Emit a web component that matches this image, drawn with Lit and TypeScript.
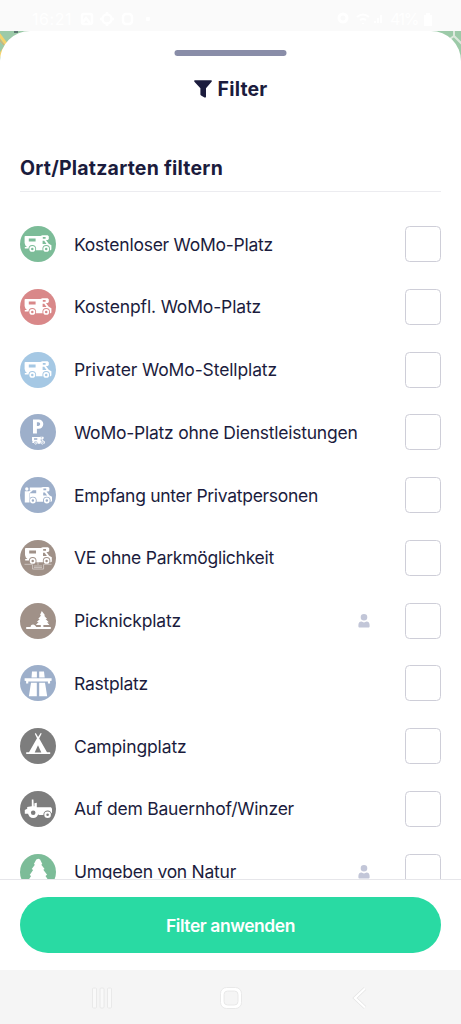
import { LitElement, html, css, svg, nothing } from "lit";
import { customElement, property } from "lit/decorators.js";

const camper = (bg: string) => svg`
  <path fill="#fff" d="M4.6 10.6 L5.4 9.9 H20.4 L22.4 9.3 H27.6 L28.8 10.2 V13 L27.8 14 H26 L28.7 17.7 L31.4 19.2 V23.4 L30.6 24.2 H9.4 V22.4 H4.800 V21 H7 L5.4 19.600 L4.600 17Z"/>
  <path fill=${bg} d="M8.8 12.600h6.800v3H8.800z M22.800 11h2.800v1.700h-2.800z M22.600 14.800h1.600l2.300 3.200h-3.900z"/>
  <circle cx="12.300" cy="22.900" r="3.800" fill=${bg}/><circle cx="26.200" cy="22.900" r="3.800" fill=${bg}/>
  <circle cx="12.300" cy="22.900" r="2.100" fill=${bg} stroke="#fff" stroke-width="1.700"/>
  <circle cx="26.200" cy="22.900" r="2.100" fill=${bg} stroke="#fff" stroke-width="1.700"/>`;

const glyphs: Record<string, (bg: string) => unknown> = {
  camper,
  parking: (bg) => svg`
    <path fill="#fff" fill-rule="evenodd" d="M13 5.400h5.600a4.700 4.700 0 0 1 0 9.400h-1.700v4.800H13z M16.900 8.300v3.600h1.500a1.800 1.800 0 0 0 0-3.600z"/>
    <g transform="translate(9.800 18.200) scale(.48)">${camper(bg)}</g>`,
  host: (bg) => svg`<g transform="translate(.6 .6)">${camper(bg)}</g>
    <path fill=${bg} d="M3.800 9.500h6v17.500h-6z"/>
    <circle cx="6.800" cy="12" r="1.700" fill="#fff"/>
    <path fill="#fff" d="M4.800 14.200h4.200l3-2 .7 1.200-3.200 2.800v9.300H4.800z"/>`,
  service: (bg) => svg`<g transform="translate(.4 -2)">${camper(bg)}</g>
    <path fill="none" stroke="#fff" stroke-opacity=".65" stroke-width=".7" d="M4.500 24.300H12M24 24.300h7.500M12.600 24.300v4.800h11v-4.800M14 26h8M14 27.600h8M18 20v5"/>`,
  picnic: () => svg`
    <path fill="#fff" d="M6.200 24.100h24.600v2H6.200z M10.500 24.200c.3-2 1.300-2.600 2.500-2.600 1.500 0 2.200 1 3.500 2.600z M21.800 8l3.400 4.400h-1.200l3.100 3.600h-1.500l3.200 3.300h-1.700l2.300 2.600h-6v2.400h-2.600v-2.400h-5l2.800-2.800h-1.800l3-3.200h-1.600l3-3.600h-1.300z"/>`,
  highway: (bg) => svg`
    <path fill="#fff" d="M12 6.400h4.900v6.100h-5.400z M19.200 6.400H24l.7 6.100h-5.500z M4.600 13.200h27v2.500l-1.500.4v2.500h-2.200v-2.200H8.300v2.200H6.100v-2.500l-1.500-.4z M11 17.700h5.800v13.500H8.900z M19.200 17.700H25l2.200 13.500h-8z"/>
    <path fill=${bg} d="M17 6h2v6h-2z"/>`,
  tent: (bg) => svg`
    <path fill="#fff" d="M6.200 24.200H9L17 10.200l-2.200-4.500 1-.6 2.300 3.800L20.700 5l1 .6-2.500 4.800L27 24.200h3.200v1.800h-24z"/>
    <path fill=${bg} d="M18 17.200l3.300 7.400h-6.600z"/>`,
  tractor: (bg) => svg`
    <path fill="#fff" d="M11.800 8.600h1.600l.4 6.700h.6v-3l2.400-.6v4.500h14.200l1 1.500v4.500h-2.600l-1 1.700H18.800l-1-1.200h-13v-3.600l2.400-1.300V16l4.600-.8z"/>
    <circle cx="13.200" cy="21.700" r="5.200" fill="#fff"/><circle cx="13.200" cy="21.700" r="2.300" fill=${bg}/>
    <circle cx="27.600" cy="23.800" r="4.200" fill=${bg}/><circle cx="27.600" cy="23.800" r="2.300" fill=${bg} stroke="#fff" stroke-width="2"/>`,
  nature: () => svg`
    <path fill="#fff" d="M18.400 4.800l1.700.8 2.200 4.500-1 .7 3.300 4.100-1.300.9 3.800 5-1.600 1.100 3.200 4.800-1.500 1.300H20V34h-3v-6H9.300l-1.200-1.300 3-4.800-1.400-1 3.400-4.800-1.400-1 3.200-4.300-1-.7 2.400-4.600z"/>`,
};

interface Place { label: string; width: number; icon: string; color: string; member?: boolean }

const places: Place[] = [
  { label: "Kostenloser WoMo-Platz", width: 199, icon: "camper", color: "#7cbc98" },
  { label: "Kostenpfl. WoMo-Platz", width: 187, icon: "camper", color: "#d98889" },
  { label: "Privater WoMo-Stellplatz", width: 203, icon: "camper", color: "#a5c8e4" },
  { label: "WoMo-Platz ohne Dienstleistungen", width: 283.5, icon: "parking", color: "#9dafca" },
  { label: "Empfang unter Privatpersonen", width: 244, icon: "host", color: "#9dafca" },
  { label: "VE ohne Parkmöglichkeit", width: 200, icon: "service", color: "#a09188" },
  { label: "Picknickplatz", width: 107, icon: "picnic", color: "#a09188", member: true },
  { label: "Rastplatz", width: 74, icon: "highway", color: "#9dafca" },
  { label: "Campingplatz", width: 112.5, icon: "tent", color: "#7d7d7d" },
  { label: "Auf dem Bauernhof/Winzer", width: 220, icon: "tractor", color: "#7d7d7d" },
  { label: "Umgeben von Natur", width: 162, icon: "nature", color: "#7cbc98", member: true },
];

/** Text whose tracking is adjusted so that it spans a given width. */
@customElement("tracked-text")
class TrackedText extends LitElement {
  static styles = css`
    :host { display: inline-block; white-space: nowrap; }
    .t { display: inline-block; }
  `;
  @property() text = "";
  @property({ type: Number }) span = 0;
  render() { return html`<span class="t">${this.text}</span>`; }
  firstUpdated() {
    const el = this.renderRoot.querySelector<HTMLElement>(".t")!;
    const natural = el.getBoundingClientRect().width;
    el.style.letterSpacing = `${(this.span - natural) / this.text.length}px`;
  }
}

@customElement("place-row")
class PlaceRow extends LitElement {
  static styles = css`
    :host { display: flex; align-items: center; height: 36px; flex: none; }
    .icon { width: 36px; height: 36px; margin-right: 18px; flex: none; }
    .label { flex: 1; font-size: 17.5px; line-height: 24px; padding-top: 1px; }
    .member { width: 12px; height: 14px; margin-right: 35px; }
    .box { box-sizing: border-box; width: 36px; height: 36px; border: 1.5px solid #ceced8; border-radius: 4.5px; background: #fff; }
  `;
  @property({ attribute: false }) place!: Place;
  render() {
    const p = this.place;
    return html`
      <svg class="icon" viewBox="0 0 36 36"><circle cx="18" cy="18" r="18" fill=${p.color}/>${glyphs[p.icon](p.color)}</svg>
      <span class="label"><tracked-text .text=${p.label} .span=${p.width}></tracked-text></span>
      ${p.member ? html`<svg class="member" viewBox="0 0 12 14"><path fill="#c2c6d8" d="M6 0a3.200 3.200 0 1 1 0 6.600A3.200 3.200 0 0 1 6 0z M3.400 7.400 6 8.600l2.600-1.200C10.700 7.500 11.600 9 11.600 11v1.500q0 1-1 1H1.400q-1 0-1-1V11C.4 9 1.300 7.500 3.400 7.400z"/></svg>` : nothing}
      <span class="box"></span>`;
  }
}

@customElement("app-root")
class AppRoot extends LitElement {
  static styles = css`
    :host { display: flex; flex-direction: column; width: 461px; height: 1024px; overflow: hidden; background: #fff; color: #1b1c3d; font-family: Inter, "Open Sans", sans-serif; }
    .status { height: 31px; flex: none; box-sizing: border-box; padding: 7px 29px 0 32px; display: flex; align-items: center; justify-content: space-between; background: #fafafa; color: #fff; font-size: 16px; }
    .status div { display: flex; align-items: center; gap: 6px; }
    .status svg { display: block; }
    .stage { flex: 1; min-height: 0; display: grid; }
    .map { grid-area: 1 / 1; width: 461px; height: 40px; }
    .sheet { grid-area: 1 / 1; z-index: 1; min-height: 0; display: flex; flex-direction: column; background: #fff; border-radius: 30px 30px 0 0; }
    .handle { width: 112px; height: 6px; border-radius: 3px; background: #898da8; margin: 18.5px auto 0; transform: translateX(-.5px); flex: none; }
    .title { display: flex; align-items: center; justify-content: center; gap: 6px; height: 28px; margin-top: 19px; font-weight: 700; font-size: 19.5px; flex: none; }
    .heading { margin: 52px 20px 0; height: 37.5px; line-height: 26px; box-sizing: border-box; border-bottom: 1.5px solid #ececf0; font-weight: 700; font-size: 19.5px; flex: none; }
    .list { flex: 1; min-height: 0; overflow: hidden; padding: 34px 20px 0; display: flex; flex-direction: column; gap: 26.75px; }
    .action { height: 91px; flex: none; box-sizing: border-box; border-top: 1.5px solid #e6e6ea; padding: 17px 20px 0; }
    .apply { display: block; width: 100%; height: 56px; border: 0; border-radius: 28px; padding: 0; background: #29daa3; color: #fff; font-family: inherit; font-size: 17.5px; font-weight: 600; }
    .nav { height: 54px; flex: none; background: #f5f5f5; display: block; }
  `;
  render() {
    return html`
      <div class="status">
        <div>
          <tracked-text .text=${"16:21"} .span=${40}></tracked-text>
          <svg width="76" height="16" viewBox="0 0 76 16" fill="none" stroke="#fff" stroke-width="2.5">
            <rect x="4" y="3" width="10" height="10" rx="2"/><path d="m5 11 3-4 4 5"/>
            <circle cx="29" cy="8" r="4.5"/><path d="M29 1v3M29 12v3M22 8h3M33 8h3"/>
            <rect x="45" y="3" width="9" height="10" rx="3"/><circle cx="70" cy="8" r="1" />
          </svg>
        </div>
        <div>
          <svg width="48" height="16" viewBox="0 0 48 16" fill="none" stroke="#fff" stroke-width="2">
            <circle cx="7" cy="7" r="4" stroke-width="3"/><path d="M21 6q6-5 12 0M24 9q3-2 6 0M27 12v1M39 12v-2M42 12V7M45 12V4"/>
          </svg>
          <tracked-text .text=${"41%"} .span=${28}></tracked-text>
          <svg width="8" height="14" viewBox="0 0 8 14" fill="#fff"><path d="M2 1h4v2h2v11H0V3h2z"/></svg>
        </div>
      </div>
      <div class="stage">
        <svg class="map" viewBox="0 0 461 40">
          <rect width="461" height="40" fill="#9ccaa8"/>
          <path d="M-2 2 7 14-3 28" fill="none" stroke="#f5d26b" stroke-width="3"/>
          <path d="M-2 7 4 14" fill="none" stroke="#e9a95f" stroke-width="1"/>
          <path d="M14 0h4v2h-4z" fill="#5c7773"/>
          <path d="M454 0v5l8 8M454 5l-7 5" fill="none" stroke="#dce8dc" stroke-width="2"/>
        </svg>
        <div class="sheet">
          <div class="handle"></div>
          <div class="title">
            <svg width="18" height="18" viewBox="0 0 18 18"><path fill="#1b1c3d" d="M.8.3h16.400q1.100.4.4 1.400L12 8.300v8.400q-.3 1.200-1.500.7l-3.400-2q-.7-.4-.7-1V8.300L.4 1.700Q-.2.700.8.300z"/></svg>
            <tracked-text .text=${"Filter"} .span=${50}></tracked-text>
          </div>
          <div class="heading"><tracked-text .text=${"Ort/Platzarten filtern"} .span=${203}></tracked-text></div>
          <div class="list">${places.map((p) => html`<place-row .place=${p}></place-row>`)}</div>
          <div class="action"><button class="apply"><tracked-text .text=${"Filter anwenden"} .span=${129}></tracked-text></button></div>
        </div>
      </div>
      <svg class="nav" width="461" height="54" viewBox="0 0 461 54" fill="#f9f9f9" stroke="#e4e4e4" stroke-width=".8">
        <rect x="92.5" y="18" width="4" height="20" rx="1"/><rect x="100" y="18" width="4" height="20" rx="1"/><rect x="107.5" y="18" width="4" height="20" rx="1"/>
        <rect x="220.5" y="17.5" width="21" height="21" rx="6" fill="#fff"/><rect x="224" y="21" width="14" height="14" rx="3.5" fill="#f5f5f5"/>
        <path fill="none" stroke="#e4e4e4" stroke-width="3.600" d="m365 18.500-10 9.500 10 9.500"/><path fill="none" stroke="#fff" stroke-width="2.200" d="m365 18.500-10 9.500 10 9.500"/>
      </svg>`;
  }
}
